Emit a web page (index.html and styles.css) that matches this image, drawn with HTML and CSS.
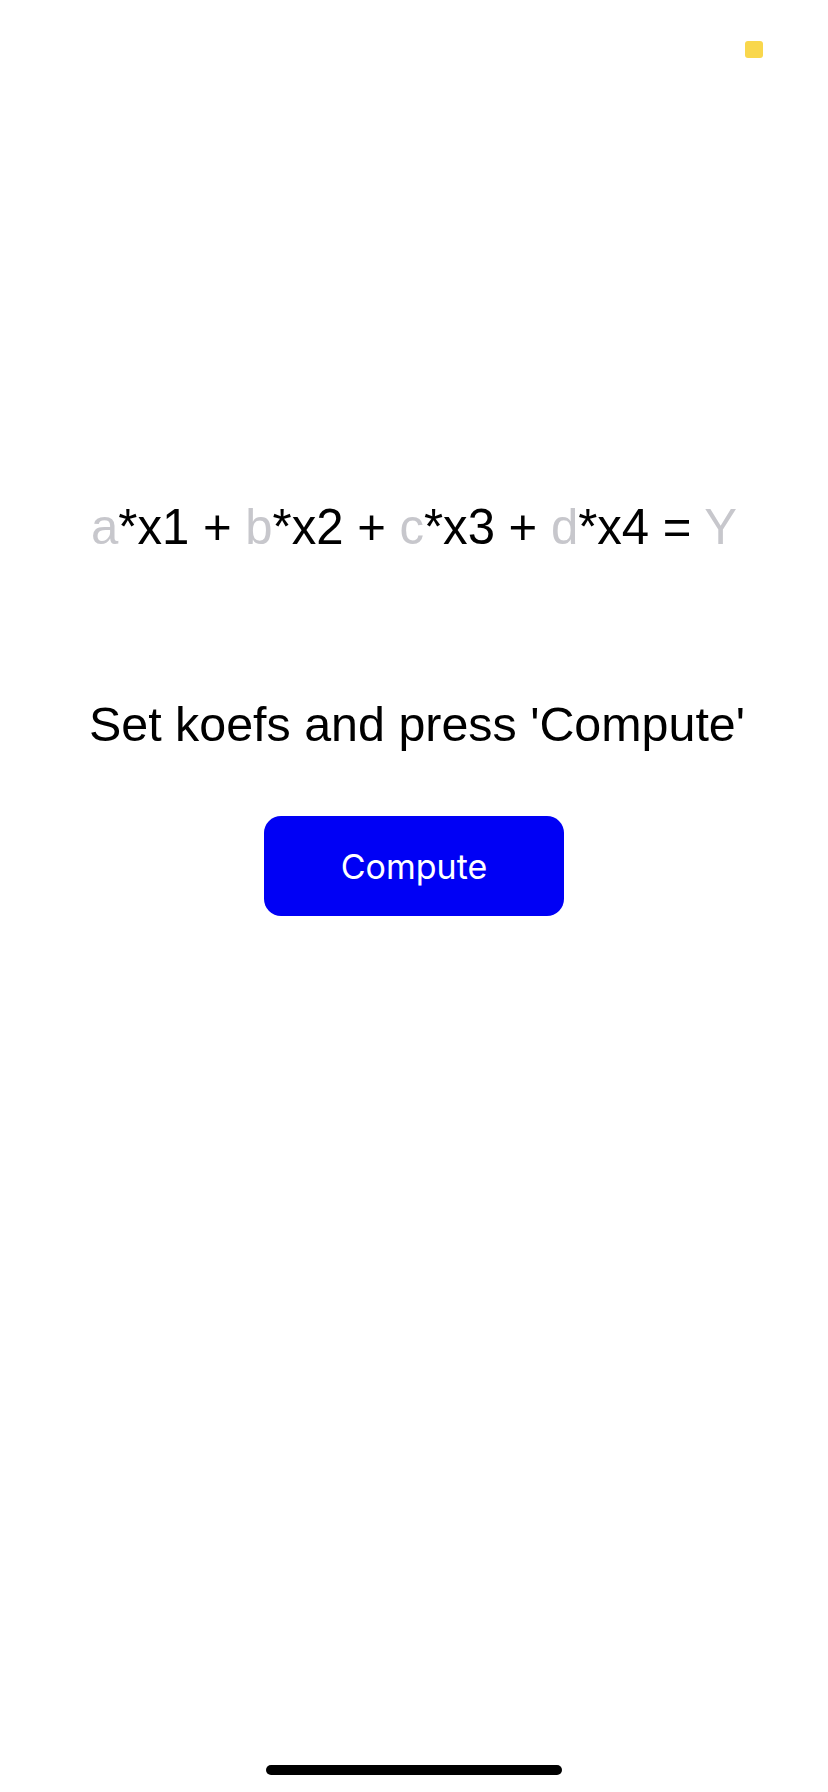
FILE: index.html
```html
<!DOCTYPE html>
<html>
<head>
<meta charset="utf-8">
<link rel="stylesheet" href="styles.css">
</head>
<body>
<div class="screen">
  <div class="top-bar"><span class="indicator"></span></div>
  <div class="equation"><span class="ph">a</span>*x1 + <span class="ph">b</span>*x2 + <span class="ph">c</span>*x3 + <span class="ph">d</span>*x4 = <span class="ph">Y</span></div>
  <div class="message">Set koefs and press 'Compute'</div>
  <button class="compute">Compute</button>
  <div class="home-indicator"></div>
</div>
</body>
</html>
```
FILE: styles.css
```css
html, body {
  margin: 0;
  padding: 0;
  background: #ffffff;
}
.screen {
  width: 828px;
  height: 1792px;
  display: flex;
  flex-direction: column;
  align-items: center;
  font-family: "Liberation Sans", Arial, sans-serif;
  color: #000000;
}
.top-bar {
  width: 100%;
  box-sizing: border-box;
  padding: 41px 65px 0 0;
  display: flex;
  justify-content: flex-end;
}
.indicator {
  width: 18px;
  height: 17px;
  border-radius: 3px;
  background: #f9d74c;
}
.equation {
  margin-top: 440px;
  font-size: 49.1px;
  line-height: 58px;
  white-space: nowrap;
}
.ph {
  color: #c7c7cc;
}
.message {
  margin-top: 139px;
  font-size: 48.4px;
  line-height: 58px;
  padding-left: 6px;
}
.compute {
  margin-top: 63px;
  width: 300px;
  height: 100px;
  border: none;
  border-radius: 17px;
  background: #0000f5;
  color: #ffffff;
  font-family: Inter, "Liberation Sans", sans-serif;
  font-size: 34px;
  display: flex;
  align-items: center;
  justify-content: center;
  padding: 0;
}
.home-indicator {
  margin-top: auto;
  margin-bottom: 17px;
  width: 296px;
  height: 10px;
  border-radius: 5px;
  background: #000000;
}
```
